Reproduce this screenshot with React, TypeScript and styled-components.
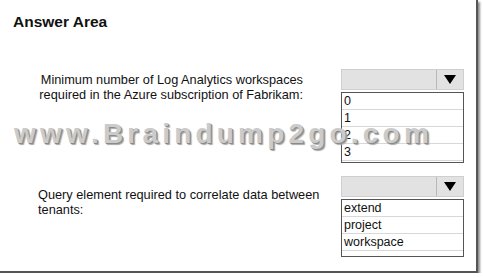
import React from "react";
import styled, { createGlobalStyle } from "styled-components";

const Global = createGlobalStyle`
  html, body { margin: 0; padding: 0; background: #fff; }
  body { font-family: "Liberation Sans", Arial, sans-serif; }
`;

const Frame = styled.div`
  position: relative;
  width: 478px;
  height: 273px;
  background: #fff;
  box-sizing: border-box;
  border-right: 2px solid #555;
  border-bottom: 2px solid #555;
  box-shadow: 2px 2px 2px rgba(0, 0, 0, 0.45);
  overflow: visible;
`;

const Title = styled.h1`
  margin: 0;
  padding: 13px 0 0 13px;
  font-size: 15.5px;
  font-weight: bold;
  line-height: 18px;
  color: #111;
`;

const Question = styled.div<{ $top: number }>`
  display: grid;
  grid-template-columns: 341px 123px;
  margin-top: ${(p) => p.$top}px;
`;

const Prompt = styled.div<{ $align: "right" | "left"; $pad: number }>`
  font-size: 12.75px;
  line-height: 14.5px;
  color: #111;
  text-align: ${(p) => p.$align};
  padding-top: ${(p) => p.$pad}px;
  padding-left: 38px;
  padding-right: ${(p) => (p.$align === "right" ? 38 : 0)}px;
  white-space: nowrap;
`;

const Dropdown = styled.div`
  display: flex;
  flex-direction: column;
  gap: 2px;
`;

const Header = styled.div`
  display: flex;
  height: 21px;
  box-sizing: border-box;
  background: #e2e2e2;
  border: 1px solid #cfcfcf;
`;

const HeaderBlank = styled.div`
  flex: 1;
`;

const ArrowCell = styled.div`
  width: 26px;
  border-left: 1px solid #b8b8b8;
  display: flex;
  align-items: center;
  justify-content: center;
`;

const List = styled.div<{ $extra: number }>`
  border: 1px solid #555;
  padding-bottom: ${(p) => p.$extra}px;
`;

const Item = styled.div`
  height: 17px;
  box-sizing: border-box;
  border-bottom: 1px solid #d8d8d8;
  padding-left: 2px;
  font-size: 12.5px;
  line-height: 17px;
  color: #111;
`;

const Watermark = styled.div`
  position: absolute;
  left: 14px;
  top: 117px;
  font-size: 28px;
  font-weight: bold;
  letter-spacing: 4.2px;
  line-height: 34px;
  color: #cbcbcb;
  text-shadow: 1px 1px 0 #8a8a8a, 2px 2px 1px #a8a8a8;
  white-space: nowrap;
  pointer-events: none;
`;

const Arrow = () => (
  <svg width="12" height="9" viewBox="0 0 12 9">
    <polygon points="0,0 12,0 6,9" fill="#000" />
  </svg>
);

const Select = ({ items, extra }: { items: string[]; extra: number }) => (
  <Dropdown>
    <Header>
      <HeaderBlank />
      <ArrowCell>
        <Arrow />
      </ArrowCell>
    </Header>
    <List $extra={extra}>
      {items.map((it) => (
        <Item key={it}>{it}</Item>
      ))}
    </List>
  </Dropdown>
);

export default function App() {
  return (
    <>
      <Global />
      <Frame>
        <Title>Answer Area</Title>
        <Question $top={38}>
          <Prompt $align="right" $pad={4}>
            Minimum number of Log Analytics workspaces
            <br />
            required in the Azure subscription of Fabrikam:
          </Prompt>
          <Select items={["0", "1", "2", "3"]} extra={1} />
        </Question>
        <Question $top={13}>
          <Prompt $align="left" $pad={12}>
            Query element required to correlate data between
            <br />
            tenants:
          </Prompt>
          <Select items={["extend", "project", "workspace"]} extra={5} />
        </Question>
        <Watermark>www.Braindump2go.com</Watermark>
      </Frame>
    </>
  );
}
